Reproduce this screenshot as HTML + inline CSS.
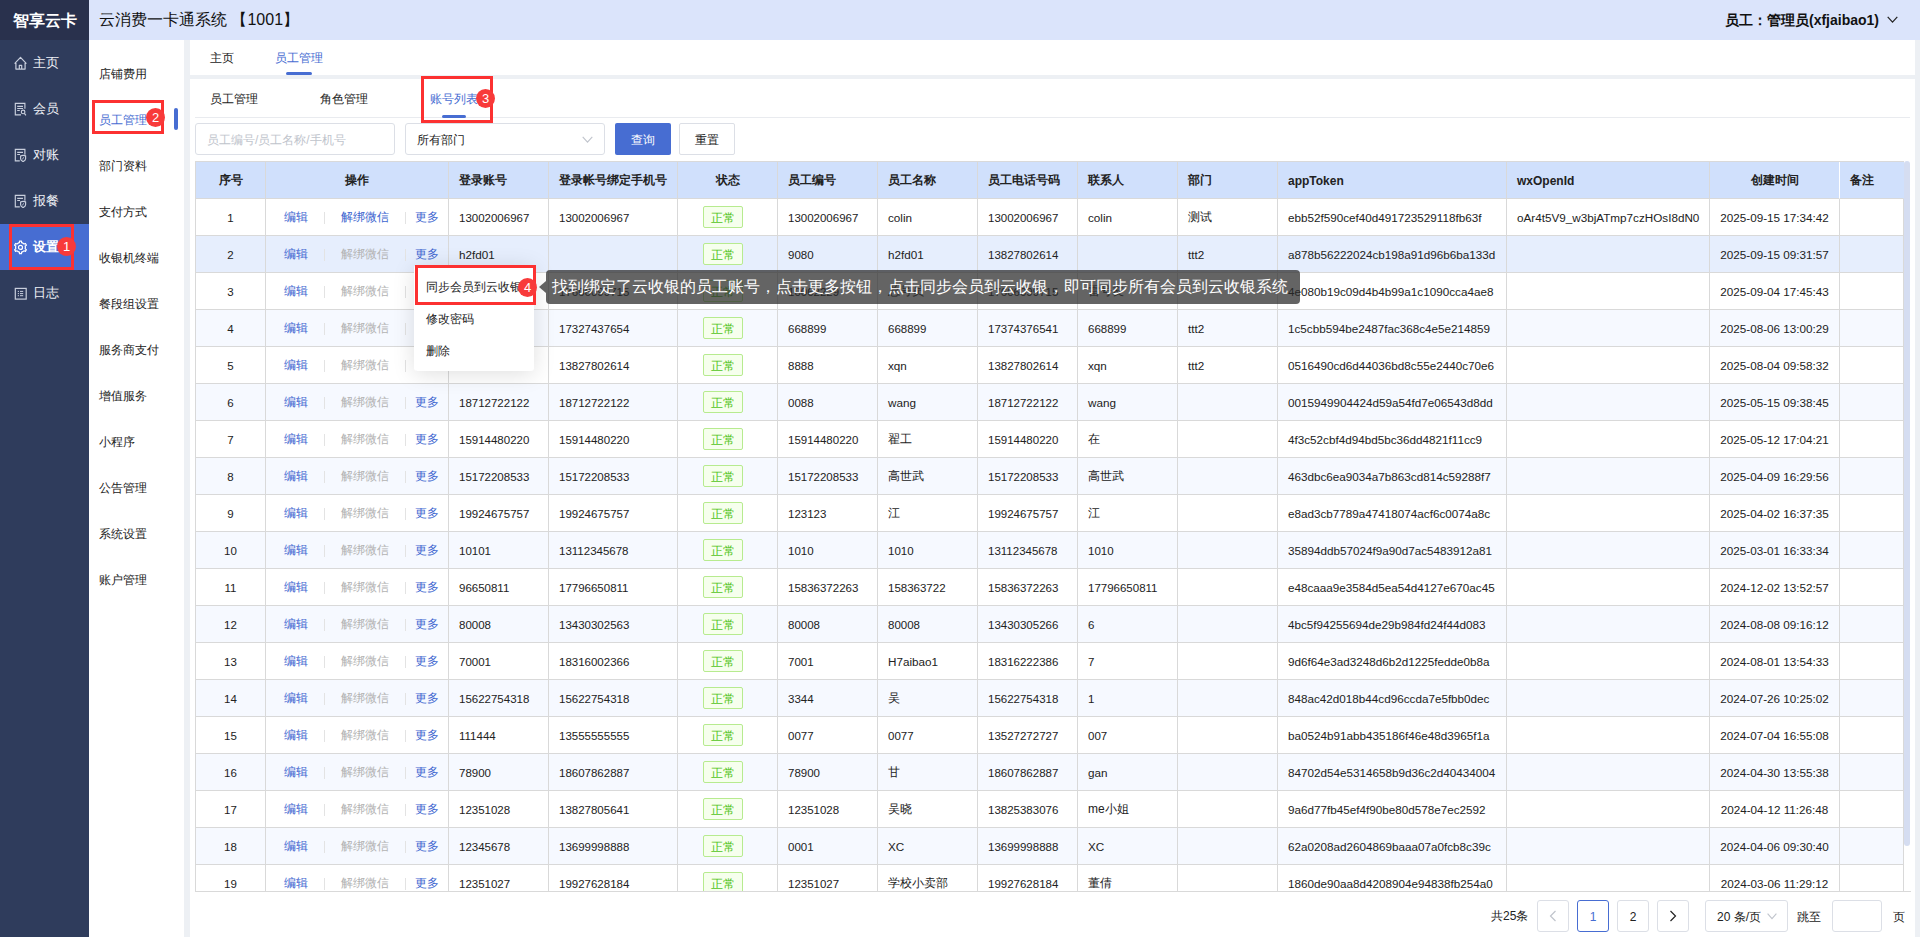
<!DOCTYPE html>
<html><head><meta charset="utf-8">
<style>
*{box-sizing:border-box;margin:0;padding:0}
html,body{width:1920px;height:937px;overflow:hidden;background:#edf0f4;font-family:"Liberation Sans",sans-serif;font-size:12px;color:#222}
.abs{position:absolute}
#side{left:0;top:0;width:89px;height:937px;background:#2f3c5c}
#logo{left:0;top:0;width:89px;height:40px;background:#29314d;color:#fff;font-size:15.6px;font-weight:bold;line-height:41px;text-align:center;letter-spacing:0px}
.mi{position:absolute;left:0;width:89px;height:46px;color:#eef0f5;font-size:13px;line-height:46px}
.mi svg{position:absolute;left:14px;top:16px}
.mi span{position:absolute;left:33px;top:0}
.mi.act{background:#476dd2;color:#fff}
#hdr{left:89px;top:0;width:1831px;height:40px;background:#dbe4fb}
#hdr .t{position:absolute;left:10px;top:0;line-height:40px;font-size:16px;color:#111}
#hdr .u{position:absolute;right:41px;top:0;line-height:40px;font-size:14px;font-weight:bold;color:#111}
#sub{left:89px;top:40px;width:95px;height:897px;background:#fff}
.si{position:absolute;left:10px;font-size:12px;color:#222;line-height:16px}
.si.act{color:#476dd2}
#bar{left:174px;top:108px;width:4px;height:22px;border-radius:2px;background:#476dd2}
#tabs1{left:190px;top:40px;width:1725px;height:35px;background:#fff}
#panel{left:190px;top:79px;width:1725px;height:858px;background:#fff}
.tab{position:absolute;font-size:12px;line-height:16px;color:#222}
.tab.act{color:#476dd2}
.uline{position:absolute;height:3px;border-radius:2px;background:#476dd2;z-index:3}
#sepl{left:195px;top:117px;width:1715px;height:1px;background:#e9ebef}
.inp{position:absolute;border:1px solid #dcdfe6;border-radius:3px;background:#fff;height:32px;font-size:12px;line-height:30px;padding-left:11px;padding-top:1px}
.btn{position:absolute;height:32px;width:56px;border-radius:2px;text-align:center;line-height:32px;font-size:12px;padding-top:1px}
/* table */
#tbl{left:195px;top:161px;width:1716px;height:731px;overflow:hidden;border-bottom:1px solid #d9d9d9}
#tin{position:absolute;left:0;top:0;width:1709px;border-left:1px solid #d9d9d9;border-top:1px solid #d9d9d9}
.tr{display:flex;height:37px;background:#fff}
.tr.th{background:#d0e0fc;font-weight:bold;color:#222}
.tr.str{background:#f6f9ff}
.tr.hov{background:#e6eefd}
.c{flex:none;height:37px;border-right:1px solid #d9d9d9;border-bottom:1px solid #d9d9d9;padding-left:10px;line-height:36px;white-space:nowrap;overflow:hidden;font-size:12px;color:#222}
.c.ctr{padding-left:0;text-align:center}
.lk{color:#4066d0}
.lk.dis{color:#b3b3b3}
.sep{display:inline-block;width:1px;height:12px;background:#e3e3e3;vertical-align:middle;margin:0 16px}
.sep.s2{margin:0 9px 0 16px}
.c.ops{padding-left:18px;text-align:left}
.n{position:relative;top:1px;font-size:11.7px}
.d{font-size:11.5px}
.tag{display:inline-block;width:40px;height:22px;line-height:19px;padding-top:2px;border:1px solid #b7eb8f;background:#f6ffed;color:#52c41a;border-radius:2px;text-align:center;vertical-align:middle;position:relative;top:-1px;left:-5px}
#sb{left:1904px;top:161px;width:6px;height:685px;border-radius:3px;background:#d5ddf1}
/* popups */
.rbox{position:absolute;border:3px solid #fc3131}
.badge{position:absolute;width:19px;height:19px;border-radius:50%;background:#f83a3a;color:#fff;font-size:13px;line-height:19px;text-align:center}
#dd{left:414px;top:265px;width:120px;height:106px;background:#fff;border-radius:3px;box-shadow:0 3px 22px rgba(0,0,0,.13)}
.ddi{position:absolute;left:12px;font-size:12px;color:#222;line-height:16px}
#tip{left:546px;top:270px;width:754px;height:34px;background:rgba(40,40,40,.72);border-radius:4px;color:#fff;font-size:16px;line-height:34px;padding-left:6px;white-space:nowrap}
#tiparr{left:539px;top:281px;width:0;height:0;border-top:6px solid transparent;border-bottom:6px solid transparent;border-right:7px solid rgba(40,40,40,.72)}
.pg{position:absolute;top:900px;height:32px;border:1px solid #dcdfe6;border-radius:3px;background:#fff;text-align:center;line-height:32px;font-size:12px;color:#222}
</style></head><body>
<div id="side" class="abs"></div>
<div id="logo" class="abs">智享云卡</div>
<div class="mi" style="top:40px"><svg width="14" height="14" viewBox="0 0 14 14"><path d="M0.6 7.7 L6.5 1.3 L12.4 7.7 M1.9 7 V13.1 H11.1 V7 M5.3 13.1 V9.4 H7.7 V13.1" fill="none" stroke="#c9cfdd" stroke-width="1.2" stroke-linejoin="round"/></svg><span>主页</span></div>
<div class="mi" style="top:86px"><svg width="14" height="14" viewBox="0 0 14 14"><path d="M10.9 6.8 V1.3 H1.3 V12.8 H7 M3.2 4.3 H9 M3.2 6.5 H9 M3.2 8.5 H5.8" fill="none" stroke="#c9cfdd" stroke-width="1.15"/><circle cx="9.1" cy="9.9" r="1.8" fill="none" stroke="#c9cfdd" stroke-width="1.15"/><path d="M10.4 11.3 L11.9 13.3" stroke="#c9cfdd" stroke-width="1.15"/></svg><span>会员</span></div>
<div class="mi" style="top:132px"><svg width="14" height="14" viewBox="0 0 14 14"><path d="M10.9 6.8 V1.3 H1.3 V12.8 H5.8 M3.2 4.4 H9 M3.2 6.5 H6" fill="none" stroke="#c9cfdd" stroke-width="1.15"/><path d="M6.6 7.9 Q9 6.8 11.6 7.9 V10.8 Q11.6 12.6 9.1 13.6 Q6.6 12.6 6.6 10.8 Z" fill="none" stroke="#c9cfdd" stroke-width="1.15"/><path d="M8.2 11.2 L10 9.4" stroke="#c9cfdd" stroke-width="1"/></svg><span>对账</span></div>
<div class="mi" style="top:178px"><svg width="14" height="14" viewBox="0 0 14 14"><path d="M10.9 6.8 V1.3 H1.3 V12.8 H5.8 M3.2 4.4 H9 M3.2 6.5 H6" fill="none" stroke="#c9cfdd" stroke-width="1.15"/><path d="M6.6 7.9 Q9 6.8 11.6 7.9 V10.8 Q11.6 12.6 9.1 13.6 Q6.6 12.6 6.6 10.8 Z" fill="none" stroke="#c9cfdd" stroke-width="1.15"/><path d="M8.2 11.2 L10 9.4" stroke="#c9cfdd" stroke-width="1"/></svg><span>报餐</span></div>
<div class="mi act" style="top:224px"><svg width="14" height="15" viewBox="0 0 14 15"><path d="M5.40 2.63 L5.51 1.18 L7.49 1.18 L7.60 2.63 L8.95 3.16 L10.08 4.06 L11.40 3.44 L12.38 5.14 L11.19 5.97 L11.40 7.40 L11.19 8.83 L12.38 9.66 L11.40 11.36 L10.08 10.74 L8.95 11.64 L7.60 12.17 L7.49 13.62 L5.51 13.62 L5.40 12.17 L4.05 11.64 L2.92 10.74 L1.60 11.36 L0.62 9.66 L1.81 8.83 L1.60 7.40 L1.81 5.97 L0.62 5.14 L1.60 3.44 L2.92 4.06 L4.05 3.16 Z" fill="none" stroke="#fff" stroke-width="1.2" stroke-linejoin="round"/><circle cx="6.5" cy="7.4" r="2" fill="none" stroke="#fff" stroke-width="1.2"/></svg><span style="font-weight:bold">设置</span></div>
<div class="mi" style="top:270px"><svg width="14" height="14" viewBox="0 0 14 14"><rect x="1.3" y="2.4" width="10.9" height="10.7" fill="none" stroke="#c9cfdd" stroke-width="1.2"/><path d="M3.8 5.4 H5 M3.8 7.6 H5 M3.8 9.7 H5 M6 5.4 H9.2 M6 7.6 H9.2 M6 9.7 H9.2" stroke="#c9cfdd" stroke-width="1"/></svg><span>日志</span></div>

<div id="hdr" class="abs"><div class="t">云消费一卡通系统 【1001】</div><div class="u">员工：管理员(xfjaibao1)</div>
<svg class="abs" style="left:1798px;top:16px" width="11" height="8" viewBox="0 0 11 8"><path d="M0.7 0.8 L5.5 6.2 L10.3 0.8" fill="none" stroke="#222" stroke-width="1.2"/></svg></div>

<div id="sub" class="abs">
<div class="si" style="top:26px">店铺费用</div>
<div class="si act" style="top:72px">员工管理</div>
<div class="si" style="top:118px">部门资料</div>
<div class="si" style="top:164px">支付方式</div>
<div class="si" style="top:210px">收银机终端</div>
<div class="si" style="top:256px">餐段组设置</div>
<div class="si" style="top:302px">服务商支付</div>
<div class="si" style="top:348px">增值服务</div>
<div class="si" style="top:394px">小程序</div>
<div class="si" style="top:440px">公告管理</div>
<div class="si" style="top:486px">系统设置</div>
<div class="si" style="top:532px">账户管理</div>
</div>
<div id="bar" class="abs"></div>

<div id="tabs1" class="abs">
<div class="tab" style="left:20px;top:10px">主页</div>
<div class="tab act" style="left:85px;top:10px">员工管理</div>
<div class="uline" style="left:96px;top:32px;width:26px"></div>
</div>
<div id="panel" class="abs">
<div class="tab" style="left:20px;top:12px">员工管理</div>
<div class="tab" style="left:130px;top:12px">角色管理</div>
<div class="tab act" style="left:240px;top:12px">账号列表</div>
<div class="uline" style="left:252px;top:36px;width:24px"></div>
</div>
<div id="sepl" class="abs"></div>
<div class="inp" style="left:195px;top:123px;width:200px;color:#c0c4cc">员工编号/员工名称/手机号</div>
<div class="inp" style="left:405px;top:123px;width:200px;color:#222">所有部门</div>
<svg class="abs" style="left:582px;top:136px" width="11" height="8" viewBox="0 0 11 8"><path d="M0.7 0.8 L5.5 6.2 L10.3 0.8" fill="none" stroke="#c0c4cc" stroke-width="1.1"/></svg>
<div class="btn" style="left:615px;top:123px;background:#476dd2;color:#fff">查询</div>
<div class="btn" style="left:679px;top:123px;border:1px solid #dcdfe6;line-height:30px;color:#222">重置</div>

<div id="tbl" class="abs"><div id="tin">
<div class="tr th"><div class="c ctr" style="width:70px">序号</div><div class="c ctr" style="width:183px">操作</div><div class="c" style="width:100px">登录账号</div><div class="c" style="width:129px">登录帐号绑定手机号</div><div class="c ctr" style="width:100px">状态</div><div class="c" style="width:100px">员工编号</div><div class="c" style="width:100px">员工名称</div><div class="c" style="width:100px">员工电话号码</div><div class="c" style="width:100px">联系人</div><div class="c" style="width:100px">部门</div><div class="c" style="width:229px"><span style="position:relative;top:1px">appToken</span></div><div class="c" style="width:203px"><span style="position:relative;top:1px">wxOpenId</span></div><div class="c ctr" style="width:130px;border-right-color:#fff">创建时间</div><div class="c" style="width:64px;border-right-color:#d0e0fc">备注</div></div>
<div class="tr"><div class="c ctr" style="width:70px"><span class="n d">1</span></div><div class="c ctr ops" style="width:183px"><span class="lk">编辑</span><span class="sep"></span><span class="lk">解绑微信</span><span class="sep s2"></span><span class="lk">更多</span></div><div class="c" style="width:100px"><span class="n d">13002006967</span></div><div class="c" style="width:129px"><span class="n d">13002006967</span></div><div class="c ctr" style="width:100px"><span class="tag">正常</span></div><div class="c" style="width:100px"><span class="n d">13002006967</span></div><div class="c" style="width:100px"><span class="n">colin</span></div><div class="c" style="width:100px"><span class="n d">13002006967</span></div><div class="c" style="width:100px"><span class="n">colin</span></div><div class="c" style="width:100px">测试</div><div class="c" style="width:229px"><span class="n">ebb52f590cef40d491723529118fb63f</span></div><div class="c" style="width:203px"><span class="n">oAr4t5V9_w3bjATmp7czHOsI8dN0</span></div><div class="c ctr" style="width:130px"><span class="n">2025-09-15 17:34:42</span></div><div class="c" style="width:64px"></div></div>
<div class="tr hov"><div class="c ctr" style="width:70px"><span class="n d">2</span></div><div class="c ctr ops" style="width:183px"><span class="lk">编辑</span><span class="sep"></span><span class="lk dis">解绑微信</span><span class="sep s2"></span><span class="lk">更多</span></div><div class="c" style="width:100px"><span class="n">h2fd01</span></div><div class="c" style="width:129px"></div><div class="c ctr" style="width:100px"><span class="tag">正常</span></div><div class="c" style="width:100px"><span class="n d">9080</span></div><div class="c" style="width:100px"><span class="n">h2fd01</span></div><div class="c" style="width:100px"><span class="n d">13827802614</span></div><div class="c" style="width:100px"></div><div class="c" style="width:100px"><span class="n">ttt2</span></div><div class="c" style="width:229px"><span class="n">a878b56222024cb198a91d96b6ba133d</span></div><div class="c" style="width:203px"></div><div class="c ctr" style="width:130px"><span class="n">2025-09-15 09:31:57</span></div><div class="c" style="width:64px"></div></div>
<div class="tr"><div class="c ctr" style="width:70px"><span class="n d">3</span></div><div class="c ctr ops" style="width:183px"><span class="lk">编辑</span><span class="sep"></span><span class="lk dis">解绑微信</span><span class="sep s2"></span><span class="lk">更多</span></div><div class="c" style="width:100px"><span class="n d">17606099715</span></div><div class="c" style="width:129px"><span class="n d">17606099715</span></div><div class="c ctr" style="width:100px"><span class="tag">正常</span></div><div class="c" style="width:100px"><span class="n d">10062229</span></div><div class="c" style="width:100px">总号员</div><div class="c" style="width:100px"><span class="n d">17606099715</span></div><div class="c" style="width:100px">雷号友</div><div class="c" style="width:100px"></div><div class="c" style="width:229px"><span class="n">4e080b19c09d4b4b99a1c1090cca4ae8</span></div><div class="c" style="width:203px"></div><div class="c ctr" style="width:130px"><span class="n">2025-09-04 17:45:43</span></div><div class="c" style="width:64px"></div></div>
<div class="tr str"><div class="c ctr" style="width:70px"><span class="n d">4</span></div><div class="c ctr ops" style="width:183px"><span class="lk">编辑</span><span class="sep"></span><span class="lk dis">解绑微信</span><span class="sep s2"></span><span class="lk">更多</span></div><div class="c" style="width:100px"><span class="n d">17327437654</span></div><div class="c" style="width:129px"><span class="n d">17327437654</span></div><div class="c ctr" style="width:100px"><span class="tag">正常</span></div><div class="c" style="width:100px"><span class="n d">668899</span></div><div class="c" style="width:100px"><span class="n d">668899</span></div><div class="c" style="width:100px"><span class="n d">17374376541</span></div><div class="c" style="width:100px"><span class="n d">668899</span></div><div class="c" style="width:100px"><span class="n">ttt2</span></div><div class="c" style="width:229px"><span class="n">1c5cbb594be2487fac368c4e5e214859</span></div><div class="c" style="width:203px"></div><div class="c ctr" style="width:130px"><span class="n">2025-08-06 13:00:29</span></div><div class="c" style="width:64px"></div></div>
<div class="tr"><div class="c ctr" style="width:70px"><span class="n d">5</span></div><div class="c ctr ops" style="width:183px"><span class="lk">编辑</span><span class="sep"></span><span class="lk dis">解绑微信</span><span class="sep s2"></span><span class="lk">更多</span></div><div class="c" style="width:100px"><span class="n d">13827802614</span></div><div class="c" style="width:129px"><span class="n d">13827802614</span></div><div class="c ctr" style="width:100px"><span class="tag">正常</span></div><div class="c" style="width:100px"><span class="n d">8888</span></div><div class="c" style="width:100px"><span class="n">xqn</span></div><div class="c" style="width:100px"><span class="n d">13827802614</span></div><div class="c" style="width:100px"><span class="n">xqn</span></div><div class="c" style="width:100px"><span class="n">ttt2</span></div><div class="c" style="width:229px"><span class="n">0516490cd6d44036bd8c55e2440c70e6</span></div><div class="c" style="width:203px"></div><div class="c ctr" style="width:130px"><span class="n">2025-08-04 09:58:32</span></div><div class="c" style="width:64px"></div></div>
<div class="tr str"><div class="c ctr" style="width:70px"><span class="n d">6</span></div><div class="c ctr ops" style="width:183px"><span class="lk">编辑</span><span class="sep"></span><span class="lk dis">解绑微信</span><span class="sep s2"></span><span class="lk">更多</span></div><div class="c" style="width:100px"><span class="n d">18712722122</span></div><div class="c" style="width:129px"><span class="n d">18712722122</span></div><div class="c ctr" style="width:100px"><span class="tag">正常</span></div><div class="c" style="width:100px"><span class="n d">0088</span></div><div class="c" style="width:100px"><span class="n">wang</span></div><div class="c" style="width:100px"><span class="n d">18712722122</span></div><div class="c" style="width:100px"><span class="n">wang</span></div><div class="c" style="width:100px"></div><div class="c" style="width:229px"><span class="n">0015949904424d59a54fd7e06543d8dd</span></div><div class="c" style="width:203px"></div><div class="c ctr" style="width:130px"><span class="n">2025-05-15 09:38:45</span></div><div class="c" style="width:64px"></div></div>
<div class="tr"><div class="c ctr" style="width:70px"><span class="n d">7</span></div><div class="c ctr ops" style="width:183px"><span class="lk">编辑</span><span class="sep"></span><span class="lk dis">解绑微信</span><span class="sep s2"></span><span class="lk">更多</span></div><div class="c" style="width:100px"><span class="n d">15914480220</span></div><div class="c" style="width:129px"><span class="n d">15914480220</span></div><div class="c ctr" style="width:100px"><span class="tag">正常</span></div><div class="c" style="width:100px"><span class="n d">15914480220</span></div><div class="c" style="width:100px">翟工</div><div class="c" style="width:100px"><span class="n d">15914480220</span></div><div class="c" style="width:100px">在</div><div class="c" style="width:100px"></div><div class="c" style="width:229px"><span class="n">4f3c52cbf4d94bd5bc36dd4821f11cc9</span></div><div class="c" style="width:203px"></div><div class="c ctr" style="width:130px"><span class="n">2025-05-12 17:04:21</span></div><div class="c" style="width:64px"></div></div>
<div class="tr str"><div class="c ctr" style="width:70px"><span class="n d">8</span></div><div class="c ctr ops" style="width:183px"><span class="lk">编辑</span><span class="sep"></span><span class="lk dis">解绑微信</span><span class="sep s2"></span><span class="lk">更多</span></div><div class="c" style="width:100px"><span class="n d">15172208533</span></div><div class="c" style="width:129px"><span class="n d">15172208533</span></div><div class="c ctr" style="width:100px"><span class="tag">正常</span></div><div class="c" style="width:100px"><span class="n d">15172208533</span></div><div class="c" style="width:100px">高世武</div><div class="c" style="width:100px"><span class="n d">15172208533</span></div><div class="c" style="width:100px">高世武</div><div class="c" style="width:100px"></div><div class="c" style="width:229px"><span class="n">463dbc6ea9034a7b863cd814c59288f7</span></div><div class="c" style="width:203px"></div><div class="c ctr" style="width:130px"><span class="n">2025-04-09 16:29:56</span></div><div class="c" style="width:64px"></div></div>
<div class="tr"><div class="c ctr" style="width:70px"><span class="n d">9</span></div><div class="c ctr ops" style="width:183px"><span class="lk">编辑</span><span class="sep"></span><span class="lk dis">解绑微信</span><span class="sep s2"></span><span class="lk">更多</span></div><div class="c" style="width:100px"><span class="n d">19924675757</span></div><div class="c" style="width:129px"><span class="n d">19924675757</span></div><div class="c ctr" style="width:100px"><span class="tag">正常</span></div><div class="c" style="width:100px"><span class="n d">123123</span></div><div class="c" style="width:100px">江</div><div class="c" style="width:100px"><span class="n d">19924675757</span></div><div class="c" style="width:100px">江</div><div class="c" style="width:100px"></div><div class="c" style="width:229px"><span class="n">e8ad3cb7789a47418074acf6c0074a8c</span></div><div class="c" style="width:203px"></div><div class="c ctr" style="width:130px"><span class="n">2025-04-02 16:37:35</span></div><div class="c" style="width:64px"></div></div>
<div class="tr str"><div class="c ctr" style="width:70px"><span class="n d">10</span></div><div class="c ctr ops" style="width:183px"><span class="lk">编辑</span><span class="sep"></span><span class="lk dis">解绑微信</span><span class="sep s2"></span><span class="lk">更多</span></div><div class="c" style="width:100px"><span class="n d">10101</span></div><div class="c" style="width:129px"><span class="n d">13112345678</span></div><div class="c ctr" style="width:100px"><span class="tag">正常</span></div><div class="c" style="width:100px"><span class="n d">1010</span></div><div class="c" style="width:100px"><span class="n d">1010</span></div><div class="c" style="width:100px"><span class="n d">13112345678</span></div><div class="c" style="width:100px"><span class="n d">1010</span></div><div class="c" style="width:100px"></div><div class="c" style="width:229px"><span class="n">35894ddb57024f9a90d7ac5483912a81</span></div><div class="c" style="width:203px"></div><div class="c ctr" style="width:130px"><span class="n">2025-03-01 16:33:34</span></div><div class="c" style="width:64px"></div></div>
<div class="tr"><div class="c ctr" style="width:70px"><span class="n d">11</span></div><div class="c ctr ops" style="width:183px"><span class="lk">编辑</span><span class="sep"></span><span class="lk dis">解绑微信</span><span class="sep s2"></span><span class="lk">更多</span></div><div class="c" style="width:100px"><span class="n d">96650811</span></div><div class="c" style="width:129px"><span class="n d">17796650811</span></div><div class="c ctr" style="width:100px"><span class="tag">正常</span></div><div class="c" style="width:100px"><span class="n d">15836372263</span></div><div class="c" style="width:100px"><span class="n d">158363722</span></div><div class="c" style="width:100px"><span class="n d">15836372263</span></div><div class="c" style="width:100px"><span class="n d">17796650811</span></div><div class="c" style="width:100px"></div><div class="c" style="width:229px"><span class="n">e48caaa9e3584d5ea54d4127e670ac45</span></div><div class="c" style="width:203px"></div><div class="c ctr" style="width:130px"><span class="n">2024-12-02 13:52:57</span></div><div class="c" style="width:64px"></div></div>
<div class="tr str"><div class="c ctr" style="width:70px"><span class="n d">12</span></div><div class="c ctr ops" style="width:183px"><span class="lk">编辑</span><span class="sep"></span><span class="lk dis">解绑微信</span><span class="sep s2"></span><span class="lk">更多</span></div><div class="c" style="width:100px"><span class="n d">80008</span></div><div class="c" style="width:129px"><span class="n d">13430302563</span></div><div class="c ctr" style="width:100px"><span class="tag">正常</span></div><div class="c" style="width:100px"><span class="n d">80008</span></div><div class="c" style="width:100px"><span class="n d">80008</span></div><div class="c" style="width:100px"><span class="n d">13430305266</span></div><div class="c" style="width:100px"><span class="n d">6</span></div><div class="c" style="width:100px"></div><div class="c" style="width:229px"><span class="n">4bc5f94255694de29b984fd24f44d083</span></div><div class="c" style="width:203px"></div><div class="c ctr" style="width:130px"><span class="n">2024-08-08 09:16:12</span></div><div class="c" style="width:64px"></div></div>
<div class="tr"><div class="c ctr" style="width:70px"><span class="n d">13</span></div><div class="c ctr ops" style="width:183px"><span class="lk">编辑</span><span class="sep"></span><span class="lk dis">解绑微信</span><span class="sep s2"></span><span class="lk">更多</span></div><div class="c" style="width:100px"><span class="n d">70001</span></div><div class="c" style="width:129px"><span class="n d">18316002366</span></div><div class="c ctr" style="width:100px"><span class="tag">正常</span></div><div class="c" style="width:100px"><span class="n d">7001</span></div><div class="c" style="width:100px"><span class="n">H7aibao1</span></div><div class="c" style="width:100px"><span class="n d">18316222386</span></div><div class="c" style="width:100px"><span class="n d">7</span></div><div class="c" style="width:100px"></div><div class="c" style="width:229px"><span class="n">9d6f64e3ad3248d6b2d1225fedde0b8a</span></div><div class="c" style="width:203px"></div><div class="c ctr" style="width:130px"><span class="n">2024-08-01 13:54:33</span></div><div class="c" style="width:64px"></div></div>
<div class="tr str"><div class="c ctr" style="width:70px"><span class="n d">14</span></div><div class="c ctr ops" style="width:183px"><span class="lk">编辑</span><span class="sep"></span><span class="lk dis">解绑微信</span><span class="sep s2"></span><span class="lk">更多</span></div><div class="c" style="width:100px"><span class="n d">15622754318</span></div><div class="c" style="width:129px"><span class="n d">15622754318</span></div><div class="c ctr" style="width:100px"><span class="tag">正常</span></div><div class="c" style="width:100px"><span class="n d">3344</span></div><div class="c" style="width:100px">吴</div><div class="c" style="width:100px"><span class="n d">15622754318</span></div><div class="c" style="width:100px"><span class="n d">1</span></div><div class="c" style="width:100px"></div><div class="c" style="width:229px"><span class="n">848ac42d018b44cd96ccda7e5fbb0dec</span></div><div class="c" style="width:203px"></div><div class="c ctr" style="width:130px"><span class="n">2024-07-26 10:25:02</span></div><div class="c" style="width:64px"></div></div>
<div class="tr"><div class="c ctr" style="width:70px"><span class="n d">15</span></div><div class="c ctr ops" style="width:183px"><span class="lk">编辑</span><span class="sep"></span><span class="lk dis">解绑微信</span><span class="sep s2"></span><span class="lk">更多</span></div><div class="c" style="width:100px"><span class="n d">111444</span></div><div class="c" style="width:129px"><span class="n d">13555555555</span></div><div class="c ctr" style="width:100px"><span class="tag">正常</span></div><div class="c" style="width:100px"><span class="n d">0077</span></div><div class="c" style="width:100px"><span class="n d">0077</span></div><div class="c" style="width:100px"><span class="n d">13527272727</span></div><div class="c" style="width:100px"><span class="n d">007</span></div><div class="c" style="width:100px"></div><div class="c" style="width:229px"><span class="n">ba0524b91abb435186f46e48d3965f1a</span></div><div class="c" style="width:203px"></div><div class="c ctr" style="width:130px"><span class="n">2024-07-04 16:55:08</span></div><div class="c" style="width:64px"></div></div>
<div class="tr str"><div class="c ctr" style="width:70px"><span class="n d">16</span></div><div class="c ctr ops" style="width:183px"><span class="lk">编辑</span><span class="sep"></span><span class="lk dis">解绑微信</span><span class="sep s2"></span><span class="lk">更多</span></div><div class="c" style="width:100px"><span class="n d">78900</span></div><div class="c" style="width:129px"><span class="n d">18607862887</span></div><div class="c ctr" style="width:100px"><span class="tag">正常</span></div><div class="c" style="width:100px"><span class="n d">78900</span></div><div class="c" style="width:100px">甘</div><div class="c" style="width:100px"><span class="n d">18607862887</span></div><div class="c" style="width:100px"><span class="n">gan</span></div><div class="c" style="width:100px"></div><div class="c" style="width:229px"><span class="n">84702d54e5314658b9d36c2d40434004</span></div><div class="c" style="width:203px"></div><div class="c ctr" style="width:130px"><span class="n">2024-04-30 13:55:38</span></div><div class="c" style="width:64px"></div></div>
<div class="tr"><div class="c ctr" style="width:70px"><span class="n d">17</span></div><div class="c ctr ops" style="width:183px"><span class="lk">编辑</span><span class="sep"></span><span class="lk dis">解绑微信</span><span class="sep s2"></span><span class="lk">更多</span></div><div class="c" style="width:100px"><span class="n d">12351028</span></div><div class="c" style="width:129px"><span class="n d">13827805641</span></div><div class="c ctr" style="width:100px"><span class="tag">正常</span></div><div class="c" style="width:100px"><span class="n d">12351028</span></div><div class="c" style="width:100px">吴晓</div><div class="c" style="width:100px"><span class="n d">13825383076</span></div><div class="c" style="width:100px">me小姐</div><div class="c" style="width:100px"></div><div class="c" style="width:229px"><span class="n">9a6d77fb45ef4f90be80d578e7ec2592</span></div><div class="c" style="width:203px"></div><div class="c ctr" style="width:130px"><span class="n">2024-04-12 11:26:48</span></div><div class="c" style="width:64px"></div></div>
<div class="tr str"><div class="c ctr" style="width:70px"><span class="n d">18</span></div><div class="c ctr ops" style="width:183px"><span class="lk">编辑</span><span class="sep"></span><span class="lk dis">解绑微信</span><span class="sep s2"></span><span class="lk">更多</span></div><div class="c" style="width:100px"><span class="n d">12345678</span></div><div class="c" style="width:129px"><span class="n d">13699998888</span></div><div class="c ctr" style="width:100px"><span class="tag">正常</span></div><div class="c" style="width:100px"><span class="n d">0001</span></div><div class="c" style="width:100px"><span class="n">XC</span></div><div class="c" style="width:100px"><span class="n d">13699998888</span></div><div class="c" style="width:100px"><span class="n">XC</span></div><div class="c" style="width:100px"></div><div class="c" style="width:229px"><span class="n">62a0208ad2604869baaa07a0fcb8c39c</span></div><div class="c" style="width:203px"></div><div class="c ctr" style="width:130px"><span class="n">2024-04-06 09:30:40</span></div><div class="c" style="width:64px"></div></div>
<div class="tr"><div class="c ctr" style="width:70px"><span class="n d">19</span></div><div class="c ctr ops" style="width:183px"><span class="lk">编辑</span><span class="sep"></span><span class="lk dis">解绑微信</span><span class="sep s2"></span><span class="lk">更多</span></div><div class="c" style="width:100px"><span class="n d">12351027</span></div><div class="c" style="width:129px"><span class="n d">19927628184</span></div><div class="c ctr" style="width:100px"><span class="tag">正常</span></div><div class="c" style="width:100px"><span class="n d">12351027</span></div><div class="c" style="width:100px">学校小卖部</div><div class="c" style="width:100px"><span class="n d">19927628184</span></div><div class="c" style="width:100px">董倩</div><div class="c" style="width:100px"></div><div class="c" style="width:229px"><span class="n">1860de90aa8d4208904e94838fb254a0</span></div><div class="c" style="width:203px"></div><div class="c ctr" style="width:130px"><span class="n">2024-03-06 11:29:12</span></div><div class="c" style="width:64px"></div></div>
</div></div>
<div id="sb" class="abs"></div>

<!-- pagination -->
<div class="abs" style="left:1491px;top:908px;font-size:12px;line-height:16px;color:#222">共25条</div>
<div class="pg" style="left:1537px;width:32px"><svg width="8" height="12" viewBox="0 0 8 12" style="margin-top:9px"><path d="M6.5 1 L1.5 6 L6.5 11" fill="none" stroke="#c0c4cc" stroke-width="1.2"/></svg></div>
<div class="pg" style="left:1577px;width:32px;border-color:#476dd2;color:#476dd2">1</div>
<div class="pg" style="left:1617px;width:32px">2</div>
<div class="pg" style="left:1657px;width:32px"><svg width="8" height="12" viewBox="0 0 8 12" style="margin-top:9px"><path d="M1.5 1 L6.5 6 L1.5 11" fill="none" stroke="#222" stroke-width="1.2"/></svg></div>
<div class="pg" style="left:1705px;width:83px;text-align:left;padding-left:11px">20 条/页</div>
<svg class="abs" style="left:1767px;top:913px" width="10" height="7" viewBox="0 0 10 7"><path d="M0.6 0.7 L5 5.6 L9.4 0.7" fill="none" stroke="#c0c4cc" stroke-width="1.1"/></svg>
<div class="abs" style="left:1797px;top:909px;font-size:12px;line-height:16px;color:#222">跳至</div>
<div class="pg" style="left:1832px;width:50px"></div>
<div class="abs" style="left:1893px;top:909px;font-size:12px;line-height:16px;color:#222">页</div>

<!-- annotations -->
<div class="rbox" style="left:9px;top:224px;width:65px;height:46px"></div>
<div class="badge" style="left:57px;top:237px">1</div>
<div class="rbox" style="left:92px;top:100px;width:72px;height:34px"></div>
<div class="badge" style="left:146px;top:108px">2</div>
<div class="rbox" style="left:421px;top:76px;width:72px;height:47px"></div>
<div class="badge" style="left:476px;top:89px">3</div>

<div id="dd" class="abs">
<div class="ddi" style="top:14px">同步会员到云收银</div>
<div class="ddi" style="top:46px">修改密码</div>
<div class="ddi" style="top:78px">删除</div>
</div>
<div class="rbox" style="left:415px;top:265px;width:121px;height:40px"></div>
<div class="badge" style="left:518px;top:278px">4</div>
<div id="tiparr" class="abs"></div>
<div id="tip" class="abs">找到绑定了云收银的员工账号，点击更多按钮，点击同步会员到云收银，即可同步所有会员到云收银系统</div>
</body></html>
